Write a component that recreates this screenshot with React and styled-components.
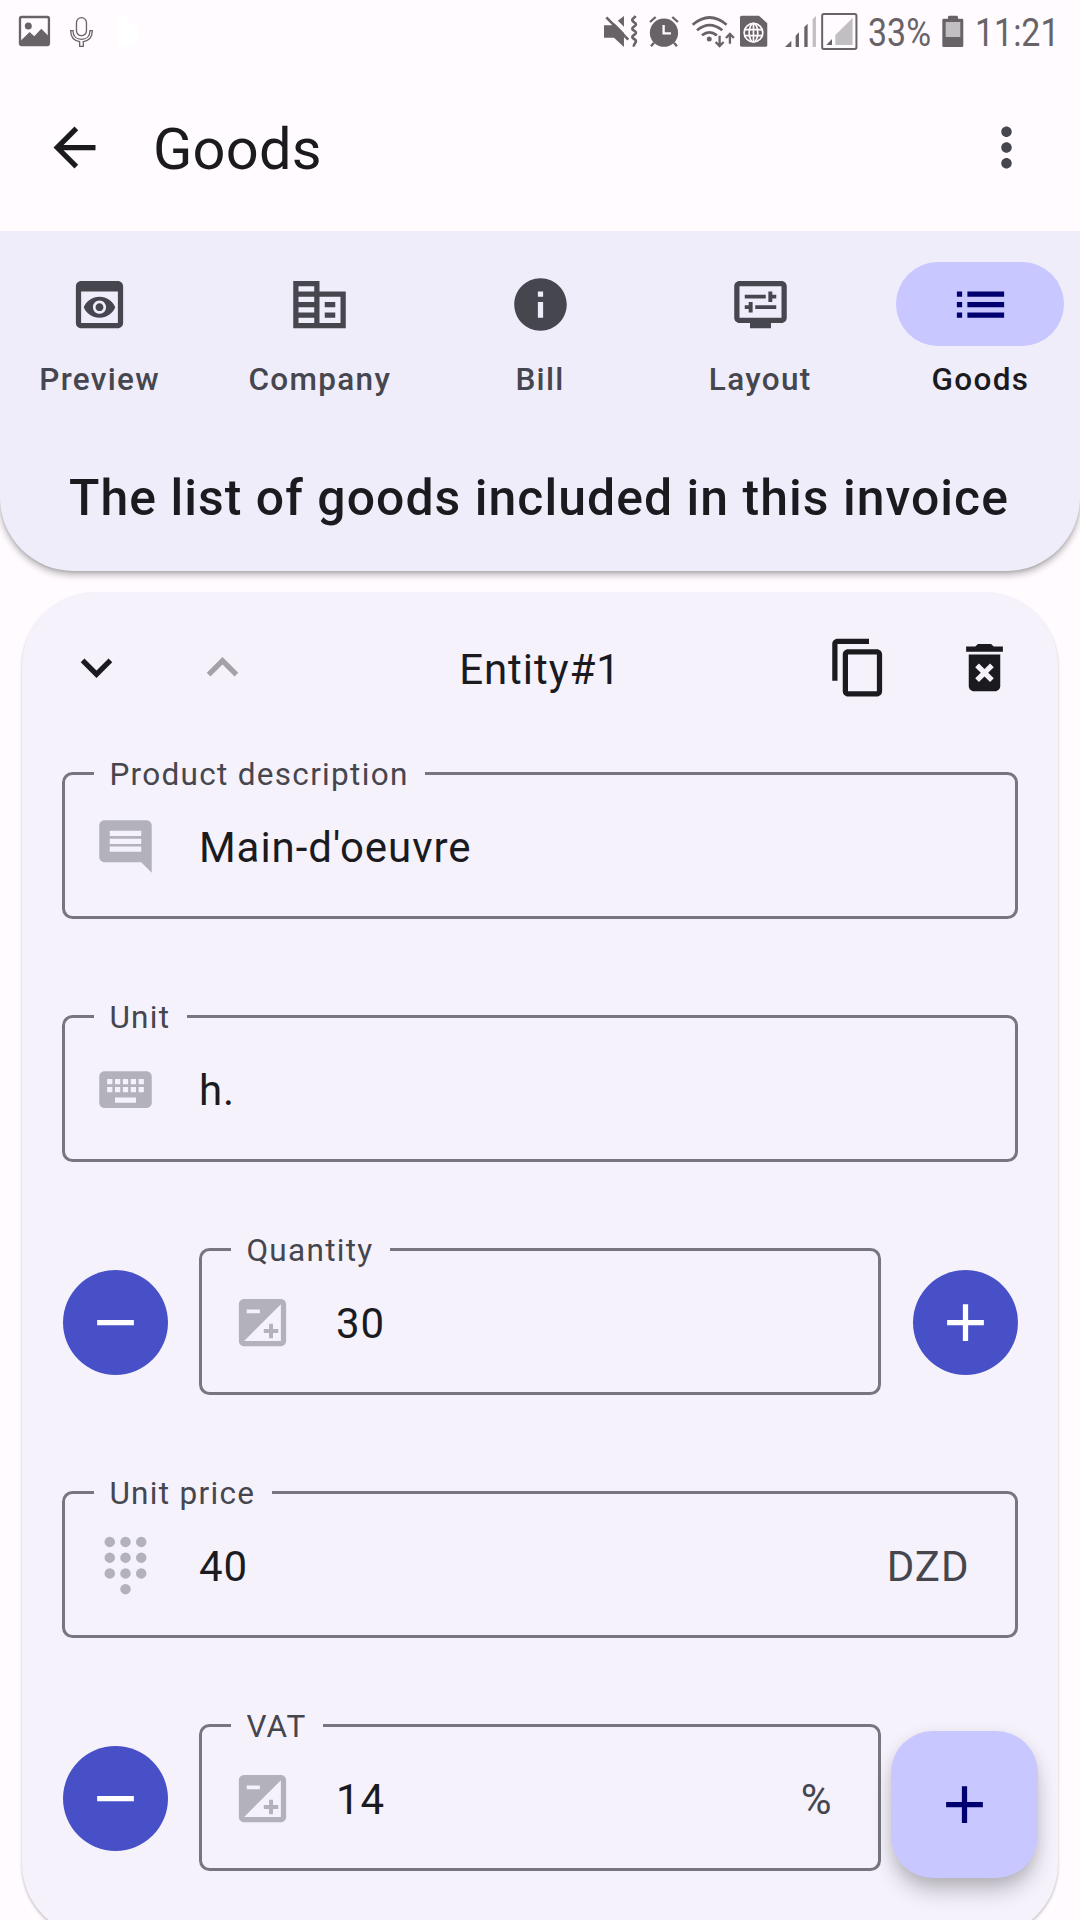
import React from "react";
import styled, { createGlobalStyle } from "styled-components";

const GlobalStyle = createGlobalStyle`
  *, *::before, *::after { box-sizing: border-box; }
  html, body { margin: 0; padding: 0; background: #fffbff; }
  body { font-family: Roboto, "Noto Sans", sans-serif; color: #1b1b1f; }
  button { font: inherit; border: 0; padding: 0; background: none; color: inherit; }
`;

const Screen = styled.div`
  position: relative;
  width: 1080px;
  height: 1920px;
  overflow: hidden;
  background: #fffbff;
  display: flex;
  flex-direction: column;
`;

/* ---------- status bar ---------- */

const StatusBar = styled.div`
  display: flex;
  justify-content: space-between;
  height: 63px;
  flex: none;
  padding: 12px 23px 0 18px;
  color: #676367;
`;

const StatusGroup = styled.div`
  display: flex;
  align-items: flex-start;
`;

const StatusSvg = styled.svg`
  display: block;
  flex: none;
  height: 39px;
  width: ${(p) => p.$w}px;
  margin-left: ${(p) => p.$ml || 0}px;
`;

const StatusText = styled.span`
  display: block;
  flex: none;
  width: ${(p) => p.$w}px;
  margin-left: ${(p) => p.$ml}px;
  font-size: 39px;
  line-height: 43px;
  white-space: nowrap;
  transform: scaleX(0.87);
  transform-origin: left center;
`;

function Glyph({ x, w, ml, children }) {
  return (
    <StatusSvg
      $w={w / 3.006}
      $ml={ml}
      viewBox={`${x} 36 ${w} 117`}
      preserveAspectRatio="none"
      fill="none"
      stroke="none"
    >
      {children}
    </StatusSvg>
  );
}

const LIGHT = "#c2bfc3";
const PAGE = "#fffbff";

function StatusIcons() {
  return (
    <StatusBar>
      <StatusGroup>
        <Glyph x={54} w={100}>
          <rect x="60" y="51" width="87" height="84" rx="5" stroke="currentColor" strokeWidth="7" />
          <circle cx="85" cy="78" r="10.500" fill="currentColor" />
          <path d="M62 122L89 96l14 13 21-23 24 24v26H62z" fill="currentColor" />
        </Glyph>
        <Glyph x={204} w={80} ml={17}>
          <rect x="229.500" y="53" width="30" height="54" rx="15" stroke="currentColor" strokeWidth="4" />
          <path
            d="M212 92h7c0 17 11 26 25.500 26S270 109 270 92h7c0 20-12 30-27 33v14h-11v-14c-15-3-27-13-27-33z"
            stroke="currentColor"
            strokeWidth="4"
          />
        </Glyph>
        <Glyph x={350} w={72} ml={22}>
          <path d="M353 48h22l12 20c18 0 30 12 30 32s-12 40-32 40h-22q-10 0-10-14z" fill="#ffffff" />
        </Glyph>
      </StatusGroup>
      <StatusGroup>
        <Glyph x={42} w={104}>
          <path d="M42 76H66L102 48V141L72 113H42Z" fill="currentColor" />
          <path d="M57 44L124 112" stroke={PAGE} strokeWidth="13" />
          <path d="M49 52L115 119" stroke="currentColor" strokeWidth="8" />
          <path
            d="M137 48c-5 8-11 7-10 13s11 6 11 12-11 7-11 13 11 6 11 12-11 7-11 13 11 6 11 12-8 9-6 17"
            stroke="currentColor"
            strokeWidth="8"
          />
        </Glyph>
        <Glyph x={174} w={96} ml={9.3}>
          <circle cx="222" cy="98" r="42.500" fill="currentColor" />
          <path d="M180 66l17-15M264 66l-17-15M192 128l-9 11M252 128l9 11" stroke="currentColor" strokeWidth="7" />
          <path d="M221 75v25h22" stroke={PAGE} strokeWidth="7" />
        </Glyph>
        <Glyph x={304} w={130} ml={11.3}>
          <path
            d="M309 74q51-43 102 0M322 91q38-31 76 0M337 106q22-18 45 0"
            stroke="currentColor"
            strokeWidth="8"
          />
          <circle cx="359" cy="117" r="7.500" fill="currentColor" />
          <path
            d="M390 107v30M378 126l12 12 12-12M421 131v-28M409 114l12-12 12 12"
            stroke="currentColor"
            strokeWidth="7"
          />
        </Glyph>
        <Glyph x={448} w={88} ml={4.6}>
          <path d="M456 47h52l25 23v66q0 4-4 4h-73q-5 0-5-4V52q0-5 5-5z" fill="currentColor" />
          <g stroke={PAGE} strokeWidth="5">
            <circle cx="491.500" cy="98" r="28" />
            <ellipse cx="491.500" cy="98" rx="13" ry="28" />
            <path d="M491.500 70v56M465 89h53M465 107h53" />
          </g>
        </Glyph>
        <Glyph x={582} w={100} ml={15.3}>
          <path d="M585 141l19-19v19zM617 141v-34l10-10v44zM643 141V81l10-10v70z" fill="currentColor" />
          <path d="M668 141V58l10-10v93z" fill={LIGHT} />
        </Glyph>
        <Glyph x={695} w={111} ml={4.3}>
          <rect x="698.500" y="42" width="103" height="105" rx="5" stroke="currentColor" strokeWidth="6" />
          <path d="M738 135v-30l52-51v81z" fill={LIGHT} />
          <path d="M711 135l17-18v18z" fill="currentColor" />
        </Glyph>
        <StatusText $w={63} $ml={9.4}>33%</StatusText>
        <Glyph x={1052} w={70} ml={10.1}>
          <path d="M1073 56v-5q0-4 4-4h22q4 0 4 4v5h12q4 0 4 4v77q0 4-4 4h-55q-4 0-4-4V60q0-4 4-4z" fill="currentColor" />
          <path d="M1066 66h44v45h-44z" fill={LIGHT} />
        </Glyph>
        <StatusText $w={82} $ml={11.1}>11:21</StatusText>
      </StatusGroup>
    </StatusBar>
  );
}

/* ---------- icons ---------- */

const IconSvg = styled.svg`
  display: block;
  flex: none;
  width: 63px;
  height: 63px;
  fill: currentColor;
`;

const PATHS = {
  back: "M20 11H7.830l5.590-5.590L12 4l-8 8 8 8 1.410-1.410L7.830 13H20v-2z",
  more: "M12 8c1.100 0 2-.9 2-2s-.9-2-2-2-2 .9-2 2 .9 2 2 2zm0 2c-1.100 0-2 .9-2 2s.9 2 2 2 2-.9 2-2-.9-2-2-2zm0 6c-1.100 0-2 .9-2 2s.9 2 2 2 2-.9 2-2-.9-2-2-2z",
  preview:
    "M19,3H5C3.890,3,3,3.900,3,5v14c0,1.100,0.890,2,2,2h14c1.100,0,2-0.900,2-2V5C21,3.900,20.110,3,19,3z M19,19H5V7h14V19z M13.500,13c0,0.830-0.670,1.500-1.500,1.500s-1.500-0.670-1.500-1.500c0-0.830,0.670-1.500,1.500-1.500S13.500,12.170,13.500,13z M12,9c-2.730,0-5.060,1.660-6,4c0.940,2.340,3.270,4,6,4s5.060-1.660,6-4C17.060,10.660,14.730,9,12,9z M12,15.500c-1.380,0-2.500-1.120-2.500-2.500c0-1.380,1.120-2.500,2.500-2.500c1.380,0,2.500,1.120,2.500,2.500C14.500,14.380,13.380,15.500,12,15.500z",
  company:
    "M12 7V3H2v18h20V7H12zM10 19H4v-2h6v2zm0-4H4v-2h6v2zm0-4H4V9h6v2zm0-4H4V5h6v2zm10 12h-8V9h8v10zm-2-8h-4v2h4v-2zm0 4h-4v2h4v-2z",
  info: "M12 2C6.480 2 2 6.480 2 12s4.480 10 10 10 10-4.480 10-10S17.520 2 12 2zm1 15h-2v-6h2v6zm0-8h-2V7h2v2z",
  layout:
    "M20,3H4C2.900,3,2,3.900,2,5v12c0,1.100,0.900,2,2,2h4v2h8v-2h4c1.100,0,2-0.900,2-2V5C22,3.900,21.100,3,20,3z M20,17H4V5h16V17z M6,8.250h8v1.500H6z M16.500,9.750H18v-1.500h-1.500V7H15v4h1.500z M10,12.250h8v1.500h-8z M7.500,15H9v-4H7.500v1.250H6v1.500h1.500z",
  list: "M3 13h2v-2H3v2zm0 4h2v-2H3v2zm0-8h2V7H3v2zm4 4h14v-2H7v2zm0 4h14v-2H7v2zM7 7v2h14V7H7z",
  down: "M7.410 8.590L12 13.170l4.590-4.580L18 10l-6 6-6-6z",
  up: "M12 8l-6 6 1.410 1.410L12 10.830l4.590 4.580L18 14z",
  copy: "M16 1H4c-1.100 0-2 .9-2 2v14h2V3h12V1zm3 4H8c-1.100 0-2 .9-2 2v14c0 1.100.9 2 2 2h11c1.100 0 2-.9 2-2V7c0-1.100-.9-2-2-2zm0 16H8V7h11v14z",
  trash:
    "M6 19c0 1.100.9 2 2 2h8c1.100 0 2-.9 2-2V7H6v12zm2.460-7.120l1.410-1.410L12 12.590l2.120-2.120 1.410 1.410L13.410 14l2.120 2.120-1.410 1.410L12 15.410l-2.120 2.120-1.410-1.410L10.590 14l-2.130-2.120zM15.500 4l-1-1h-5l-1 1H5v2h14V4z",
  comment:
    "M21.990 4c0-1.100-.89-2-1.990-2H4c-1.100 0-2 .9-2 2v12c0 1.100.9 2 2 2h14l4 4-.01-18zM18 14H6v-2h12v2zm0-3H6V9h12v2zm0-3H6V6h12v2z",
  keyboard:
    "M20 5H4c-1.100 0-1.990.9-1.990 2L2 17c0 1.100.9 2 2 2h16c1.100 0 2-.9 2-2V7c0-1.100-.9-2-2-2zm-9 3h2v2h-2V8zm0 3h2v2h-2v-2zM8 8h2v2H8V8zm0 3h2v2H8v-2zm-1 2H5v-2h2v2zm0-3H5V8h2v2zm9 7H8v-2h8v2zm0-4h-2v-2h2v2zm0-3h-2V8h2v2zm3 3h-2v-2h2v2zm0-3h-2V8h2v2z",
  exposure:
    "M19 3H5c-1.100 0-2 .9-2 2v14c0 1.100.9 2 2 2h14c1.100 0 2-.9 2-2V5c0-1.100-.9-2-2-2zM6 7h5v1.500H6zM19 19H5L19 5v14zM14.500 16v2H16v-2h2v-1.500h-2v-2h-1.500v2h-2V16z",
  dialpad:
    "M4 3a2 2 0 1 0 4 0a2 2 0 1 0-4 0zM10 3a2 2 0 1 0 4 0a2 2 0 1 0-4 0zM16 3a2 2 0 1 0 4 0a2 2 0 1 0-4 0zM4 9a2 2 0 1 0 4 0a2 2 0 1 0-4 0zM10 9a2 2 0 1 0 4 0a2 2 0 1 0-4 0zM16 9a2 2 0 1 0 4 0a2 2 0 1 0-4 0zM4 15a2 2 0 1 0 4 0a2 2 0 1 0-4 0zM10 15a2 2 0 1 0 4 0a2 2 0 1 0-4 0zM16 15a2 2 0 1 0 4 0a2 2 0 1 0-4 0zM10 21a2 2 0 1 0 4 0a2 2 0 1 0-4 0z",
  minus: "M19 13H5v-2h14v2z",
  plus: "M19 13h-6v6h-2v-6H5v-2h6V5h2v6h6v2z",
};

function Icon({ name }) {
  return (
    <IconSvg viewBox="0 0 24 24" aria-hidden="true">
      <path fillRule={name === "exposure" ? "evenodd" : "nonzero"} d={PATHS[name]} />
    </IconSvg>
  );
}

/* ---------- app bar ---------- */

const AppBar = styled.header`
  display: flex;
  align-items: center;
  flex: none;
  height: 168px;
  padding: 0 11px;
`;

const IconButton = styled.button`
  display: flex;
  align-items: center;
  justify-content: center;
  flex: none;
  width: 126px;
  height: 126px;
  color: ${(p) => (p.$disabled ? "#a4a2a8" : p.$muted ? "#46464f" : "#1b1b1f")};
`;

const Title = styled.h1`
  flex: 1;
  margin: 0 0 0 16px;
  font-size: 57.75px;
  line-height: 73px;
  font-weight: 400;
  letter-spacing: 0.25px;
  padding-top: 4px;
`;

/* ---------- navigation ---------- */

const TopCard = styled.section`
  flex: none;
  height: 340px;
  border-radius: 0 0 73.5px 73.5px;
  background: #efedfa;
  box-shadow: 0 4px 7px rgba(0, 0, 0, 0.28), 0 1px 3px rgba(0, 0, 0, 0.12);
  clip-path: inset(0 0 -30px 0);
`;

const NavBar = styled.nav`
  display: flex;
  gap: 21px;
  height: 210px;
  padding-top: 31px;
`;

const NavItem = styled.div`
  flex: 1 1 0;
  min-width: 0;
  display: flex;
  flex-direction: column;
  align-items: center;
  gap: 13px;
  color: ${(p) => (p.$active ? "#1b1b1f" : "#46464f")};
`;

const Pill = styled.div`
  display: flex;
  align-items: center;
  justify-content: center;
  width: 168px;
  height: 84px;
  border-radius: 42px;
  background: ${(p) => (p.$active ? "#c8c7ff" : "transparent")};
  color: ${(p) => (p.$active ? "#00006e" : "#46464f")};
`;

const NavLabel = styled.span`
  font-size: 31.5px;
  line-height: 42px;
  font-weight: 500;
  letter-spacing: 1.31px;
  white-space: nowrap;
`;

const Heading = styled.h2`
  margin: 0;
  padding: 26px 2px 0 0;
  text-align: center;
  font-size: 49.9px;
  line-height: 63px;
  font-weight: 500;
  letter-spacing: 1.05px;
  white-space: nowrap;
`;

/* ---------- entity card ---------- */

const EntityCard = styled.section`
  flex: none;
  height: 1345px;
  margin: 21px 22px 0;
  border-radius: 73.5px;
  background: #f5f2fc;
  box-shadow: 0 2px 3px rgba(0, 0, 0, 0.24);
`;

const EntityHeader = styled.div`
  display: flex;
  align-items: center;
  padding: 12px 11px 0;
`;

const EntityTitle = styled.h3`
  flex: 1;
  margin: 0;
  padding-top: 5px;
  text-align: center;
  font-size: 42px;
  line-height: 63px;
  font-weight: 400;
  letter-spacing: 0.95px;
`;

const Fields = styled.div`
  display: flex;
  flex-direction: column;
  gap: 69px;
  padding: 25px 40px 0;
`;

const FieldBox = styled.fieldset`
  flex: ${(p) => (p.$grow ? "1 1 0" : "none")};
  min-width: 0;
  height: 164px;
  margin: 0 0 ${(p) => (p.$spaced ? 10 : 0)}px;
  padding: 0 45.5px 0 29px;
  border: 3px solid #777680;
  border-radius: 10.5px;
`;

const FieldLabel = styled.legend`
  height: 37px;
  padding: 0 16.5px 0 15.4px;
  font-size: 31.5px;
  line-height: 39px;
  letter-spacing: 1.3px;
  color: #46464f;
  white-space: nowrap;
`;

const FieldRow = styled.div`
  display: flex;
  align-items: center;
  gap: 42px;
  height: 108px;
`;

const FieldIcon = styled.span`
  padding-top: 1px;
  color: #b3b1bb;
`;

const FieldValue = styled.span`
  flex: 1;
  padding-top: 3px;
  font-size: 42px;
  line-height: 63px;
  letter-spacing: 0.95px;
`;

const FieldSuffix = styled(FieldValue)`
  flex: none;
  color: #46464f;
`;

const StepperRow = styled.div`
  display: flex;
  align-items: flex-start;
`;

const StepButton = styled.button`
  display: flex;
  align-items: center;
  justify-content: center;
  flex: none;
  width: 105px;
  height: 105px;
  margin: 39px ${(p) => (p.$end ? 0 : 31)}px 0 ${(p) => (p.$end ? 32 : 1)}px;
  border-radius: 50%;
  background: #4850c8;
  color: #ffffff;
`;

const Fab = styled.button`
  position: absolute;
  left: 891px;
  top: 1731px;
  display: flex;
  align-items: center;
  justify-content: center;
  width: 147px;
  height: 147px;
  border-radius: 42px;
  background: #c8c7ff;
  color: #00006e;
  box-shadow: 0 15px 22px -3px rgba(0, 0, 0, 0.24), 0 3px 16px rgba(0, 0, 0, 0.08);
`;

const NAV = [
  { icon: "preview", label: "Preview" },
  { icon: "company", label: "Company" },
  { icon: "info", label: "Bill" },
  { icon: "layout", label: "Layout" },
  { icon: "list", label: "Goods", active: true },
];

function Field({ label, icon, value, suffix, spaced, grow }) {
  return (
    <FieldBox $spaced={spaced} $grow={grow}>
      <FieldLabel>{label}</FieldLabel>
      <FieldRow>
        <FieldIcon>
          <Icon name={icon} />
        </FieldIcon>
        <FieldValue>{value}</FieldValue>
        {suffix && <FieldSuffix>{suffix}</FieldSuffix>}
      </FieldRow>
    </FieldBox>
  );
}

function Stepper(props) {
  return (
    <StepperRow>
      <StepButton>
        <Icon name="minus" />
      </StepButton>
      <Field {...props} grow />
      <StepButton $end>
        <Icon name="plus" />
      </StepButton>
    </StepperRow>
  );
}

export default function App() {
  return (
    <>
      <GlobalStyle />
      <Screen>
        <StatusIcons />
        <AppBar>
          <IconButton>
            <Icon name="back" />
          </IconButton>
          <Title>Goods</Title>
          <IconButton $muted>
            <Icon name="more" />
          </IconButton>
        </AppBar>
        <TopCard>
          <NavBar>
            {NAV.map((item) => (
              <NavItem key={item.label} $active={item.active}>
                <Pill $active={item.active}>
                  <Icon name={item.icon} />
                </Pill>
                <NavLabel>{item.label}</NavLabel>
              </NavItem>
            ))}
          </NavBar>
          <Heading>The list of goods included in this invoice</Heading>
        </TopCard>
        <EntityCard>
          <EntityHeader>
            <IconButton>
              <Icon name="down" />
            </IconButton>
            <IconButton $disabled>
              <Icon name="up" />
            </IconButton>
            <EntityTitle>Entity#1</EntityTitle>
            <IconButton>
              <Icon name="copy" />
            </IconButton>
            <IconButton>
              <Icon name="trash" />
            </IconButton>
          </EntityHeader>
          <Fields>
            <Field label="Product description" icon="comment" value="Main-d'oeuvre" spaced />
            <Field label="Unit" icon="keyboard" value="h." />
            <Stepper label="Quantity" icon="exposure" value="30" spaced />
            <Field label="Unit price" icon="dialpad" value="40" suffix="DZD" />
            <Stepper label="VAT" icon="exposure" value="14" suffix="%" />
          </Fields>
        </EntityCard>
        <Fab>
          <Icon name="plus" />
        </Fab>
      </Screen>
    </>
  );
}
